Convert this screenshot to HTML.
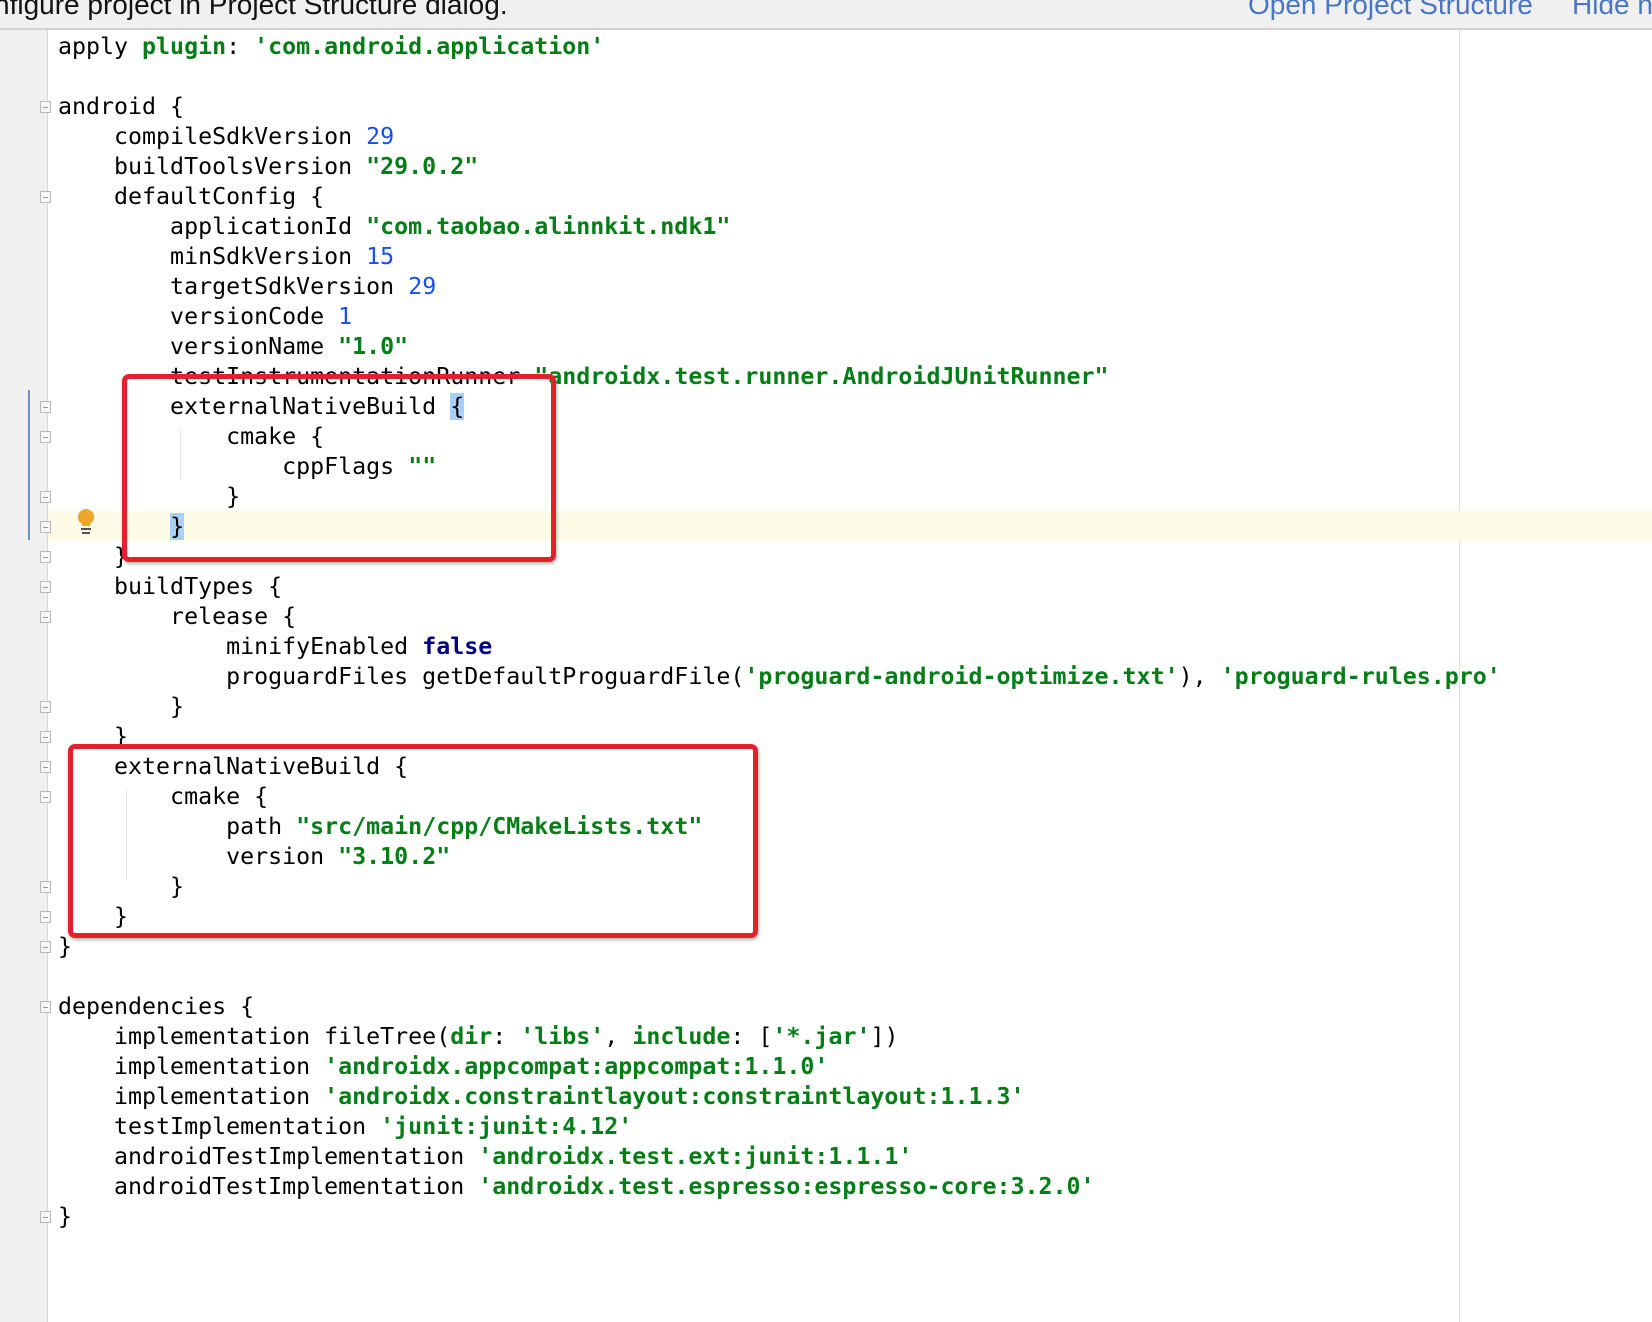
<!DOCTYPE html>
<html><head><meta charset="utf-8"><style>
body{margin:0;width:1652px;height:1322px;overflow:hidden;background:#fff;position:relative;font-family:"DejaVu Sans Mono","Liberation Mono",monospace}
.hdr{position:absolute;left:0;top:0;width:1652px;height:28px;background:#f0f0f0;border-bottom:2px solid #d2d2d2;overflow:hidden;font-family:"Liberation Sans",sans-serif;font-size:28px;white-space:nowrap}
.gut{position:absolute;left:0;top:30px;width:47px;height:1292px;background:#f0f0f0;border-right:1px solid #d8d8d8}
.rm{position:absolute;left:1459px;top:30px;width:1px;height:1292px;background:#e0e0e0}
.ln{position:absolute;left:58px;height:30px;line-height:30px;font-size:23.27px;white-space:pre;color:#000}
.s{color:#067d17;font-weight:bold}
.n{color:#1750eb}
.k{color:#000080;font-weight:bold}
.b{background:#a8cff7}
.hl{position:absolute;left:48px;top:511px;width:1604px;height:30px;background:#fdfbe6}
.box{position:absolute;border:5px solid #e3202c;border-radius:7px;box-shadow:1px 2px 3px rgba(0,0,0,.3)}
.f{position:absolute;left:40px;width:11px;height:12px;border:1px solid #b8b8b8;background:#f7f7f7;box-sizing:border-box}
.f:after{content:"";position:absolute;left:2px;right:2px;top:5px;height:1px;background:#999}
.ig{position:absolute;width:1px;background:#e2e2e2}
</style></head><body>
<div class="hdr"><span style="position:absolute;left:-6px;top:-11px;color:#111">nfigure project in Project Structure dialog.</span><span style="position:absolute;left:1248px;top:-11px;color:#4a76c4">Open Project Structure</span><span style="position:absolute;left:1572px;top:-11px;color:#4a76c4">Hide n</span></div>
<div class="gut"></div>
<div class="rm"></div>
<div class="hl"></div>
<div style="position:absolute;left:28px;top:390px;width:2px;height:150px;background:#6f8ec6"></div>
<svg style="position:absolute;left:76px;top:508px" width="20" height="28"><circle cx="10" cy="9" r="8" fill="#eea52c"/><rect x="6" y="14" width="8" height="4" fill="#eea52c"/><rect x="5" y="20" width="10" height="2" fill="#555"/><rect x="6" y="24" width="8" height="2" fill="#555"/></svg>
<div class="ig" style="left:126px;top:400px;height:110px"></div>
<div class="ig" style="left:180px;top:430px;height:50px"></div>
<div class="ig" style="left:126px;top:790px;height:90px"></div>
<div class="f" style="top:101px"></div><div class="f" style="top:191px"></div>
<div class="f" style="top:401px"></div><div class="f" style="top:431px"></div>
<div class="f" style="top:491px"></div><div class="f" style="top:521px"></div><div class="f" style="top:551px"></div>
<div class="f" style="top:581px"></div><div class="f" style="top:611px"></div>
<div class="f" style="top:701px"></div><div class="f" style="top:731px"></div>
<div class="f" style="top:761px"></div><div class="f" style="top:791px"></div>
<div class="f" style="top:881px"></div><div class="f" style="top:911px"></div><div class="f" style="top:941px"></div>
<div class="f" style="top:1001px"></div><div class="f" style="top:1211px"></div>

<div class="ln" style="top:32px">apply <span class="s">plugin</span>: <span class="s">'com.android.application'</span></div>
<div class="ln" style="top:92px">android {</div>
<div class="ln" style="top:122px">    compileSdkVersion <span class="n">29</span></div>
<div class="ln" style="top:152px">    buildToolsVersion <span class="s">"29.0.2"</span></div>
<div class="ln" style="top:182px">    defaultConfig {</div>
<div class="ln" style="top:212px">        applicationId <span class="s">"com.taobao.alinnkit.ndk1"</span></div>
<div class="ln" style="top:242px">        minSdkVersion <span class="n">15</span></div>
<div class="ln" style="top:272px">        targetSdkVersion <span class="n">29</span></div>
<div class="ln" style="top:302px">        versionCode <span class="n">1</span></div>
<div class="ln" style="top:332px">        versionName <span class="s">"1.0"</span></div>
<div class="ln" style="top:362px">        testInstrumentationRunner <span class="s">"androidx.test.runner.AndroidJUnitRunner"</span></div>
<div class="ln" style="top:392px">        externalNativeBuild <span class="b">{</span></div>
<div class="ln" style="top:422px">            cmake {</div>
<div class="ln" style="top:452px">                cppFlags <span class="s">""</span></div>
<div class="ln" style="top:482px">            }</div>
<div class="ln" style="top:512px">        <span class="b">}</span></div>
<div class="ln" style="top:542px">    }</div>
<div class="ln" style="top:572px">    buildTypes {</div>
<div class="ln" style="top:602px">        release {</div>
<div class="ln" style="top:632px">            minifyEnabled <span class="k">false</span></div>
<div class="ln" style="top:662px">            proguardFiles getDefaultProguardFile(<span class="s">'proguard-android-optimize.txt'</span>), <span class="s">'proguard-rules.pro'</span></div>
<div class="ln" style="top:692px">        }</div>
<div class="ln" style="top:722px">    }</div>
<div class="ln" style="top:752px">    externalNativeBuild {</div>
<div class="ln" style="top:782px">        cmake {</div>
<div class="ln" style="top:812px">            path <span class="s">"src/main/cpp/CMakeLists.txt"</span></div>
<div class="ln" style="top:842px">            version <span class="s">"3.10.2"</span></div>
<div class="ln" style="top:872px">        }</div>
<div class="ln" style="top:902px">    }</div>
<div class="ln" style="top:932px">}</div>
<div class="ln" style="top:992px">dependencies {</div>
<div class="ln" style="top:1022px">    implementation fileTree(<span class="s">dir</span>: <span class="s">'libs'</span>, <span class="s">include</span>: [<span class="s">'*.jar'</span>])</div>
<div class="ln" style="top:1052px">    implementation <span class="s">'androidx.appcompat:appcompat:1.1.0'</span></div>
<div class="ln" style="top:1082px">    implementation <span class="s">'androidx.constraintlayout:constraintlayout:1.1.3'</span></div>
<div class="ln" style="top:1112px">    testImplementation <span class="s">'junit:junit:4.12'</span></div>
<div class="ln" style="top:1142px">    androidTestImplementation <span class="s">'androidx.test.ext:junit:1.1.1'</span></div>
<div class="ln" style="top:1172px">    androidTestImplementation <span class="s">'androidx.test.espresso:espresso-core:3.2.0'</span></div>
<div class="ln" style="top:1202px">}</div>

<div class="box" style="left:122px;top:374px;width:424px;height:178px"></div>
<div class="box" style="left:68px;top:744px;width:680px;height:184px"></div>
</body></html>
